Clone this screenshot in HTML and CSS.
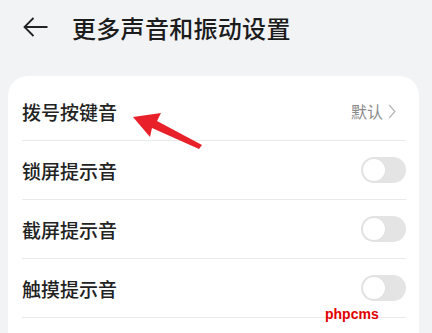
FILE: index.html
```html
<!DOCTYPE html>
<html lang="zh-CN">
<head>
<meta charset="UTF-8" />
<title>更多声音和振动设置</title>
<link rel="stylesheet" href="styles.css">
</head>
<body>

<div class="screen">
  <header class="top-bar">
    <button class="back" aria-label="返回">
      <svg viewBox="0 0 26 20" xmlns="http://www.w3.org/2000/svg">
        <path d="M11 1 L2 10 L11 19 M2 10 H25" />
      </svg>
    </button>
    <h1>更多声音和振动设置</h1>
  </header>

  <div class="card">
    <div class="row">
      <span class="label">拨号按键音</span>
      <span class="value">默认
        <svg class="chevron" viewBox="0 0 8 16" xmlns="http://www.w3.org/2000/svg">
          <path d="M1 1 L7 8 L1 15" />
        </svg>
      </span>
    </div>
    <div class="row">
      <span class="label">锁屏提示音</span>
      <span class="switch"><span class="knob"></span></span>
    </div>
    <div class="row">
      <span class="label">截屏提示音</span>
      <span class="switch"><span class="knob"></span></span>
    </div>
    <div class="row">
      <span class="label">触摸提示音</span>
      <span class="switch"><span class="knob"></span></span>
    </div>
  </div>

  <!-- 红色标注箭头 -->
  <svg class="pointer" viewBox="0 0 432 333" xmlns="http://www.w3.org/2000/svg">
    <polygon points="133,117 161,113 157,121 202,145 199,149 152,128 150,137" />
  </svg>

  <span class="watermark">phpcms</span>
</div>

</body>
</html>
```

FILE: styles.css
```css
body {
  margin: 0;
  background: #f1f3f5;
  font-family: "Noto Sans CJK SC", "Noto Sans", sans-serif;
  color: #1c1c1c;
}

.screen {
  position: relative;
  width: 432px;
  height: 333px;
  overflow: hidden;
}

.top-bar {
  display: flex;
  align-items: center;
  height: 54px;
  padding: 0 0 0 22px;
}

.back {
  width: 27px;
  height: 20px;
  padding: 0;
  border: none;
  background: transparent;
  margin-right: 23px;
}

.back svg {
  width: 100%;
  height: 100%;
  fill: none;
  stroke: #222;
  stroke-width: 1.8;
}

.top-bar h1 {
  margin: 0;
  font-size: 24px;
  font-weight: 500;
  letter-spacing: 0.3px;
}

.card {
  margin: 22px 13px 0 8px;
  padding: 6px 13px 0 14px;
  background: #fff;
  border-radius: 20px;
  height: 300px;
}

.row {
  display: flex;
  align-items: center;
  justify-content: space-between;
  height: 58px;
  border-bottom: 1px solid #e9e9e9;
}

.label {
  font-size: 19px;
  font-weight: 500;
  color: #222;
}

.value {
  display: flex;
  align-items: center;
  gap: 5px;
  margin-right: 10px;
  font-size: 16px;
  color: #8a8a8a;
}

.chevron {
  width: 8px;
  height: 15px;
  fill: none;
  stroke: #b5b5b5;
  stroke-width: 1.4;
}

/* 关闭状态的开关 */
.switch {
  display: flex;
  align-items: center;
  width: 45px;
  height: 26px;
  border-radius: 13px;
  background: #e4e4e4;
}

.switch .knob {
  width: 22px;
  height: 22px;
  margin-left: 2px;
  border-radius: 50%;
  background: #fff;
  box-shadow: 0 0 0 1px #e0e0e0;
}

.pointer {
  position: absolute;
  left: 0;
  top: 0;
  width: 432px;
  height: 333px;
  fill: #e8202a;
}

.watermark {
  position: absolute;
  left: 325px;
  top: 306px;
  font-family: "Liberation Sans", sans-serif;
  font-weight: bold;
  font-size: 14px;
  color: #e20000;
}
```
